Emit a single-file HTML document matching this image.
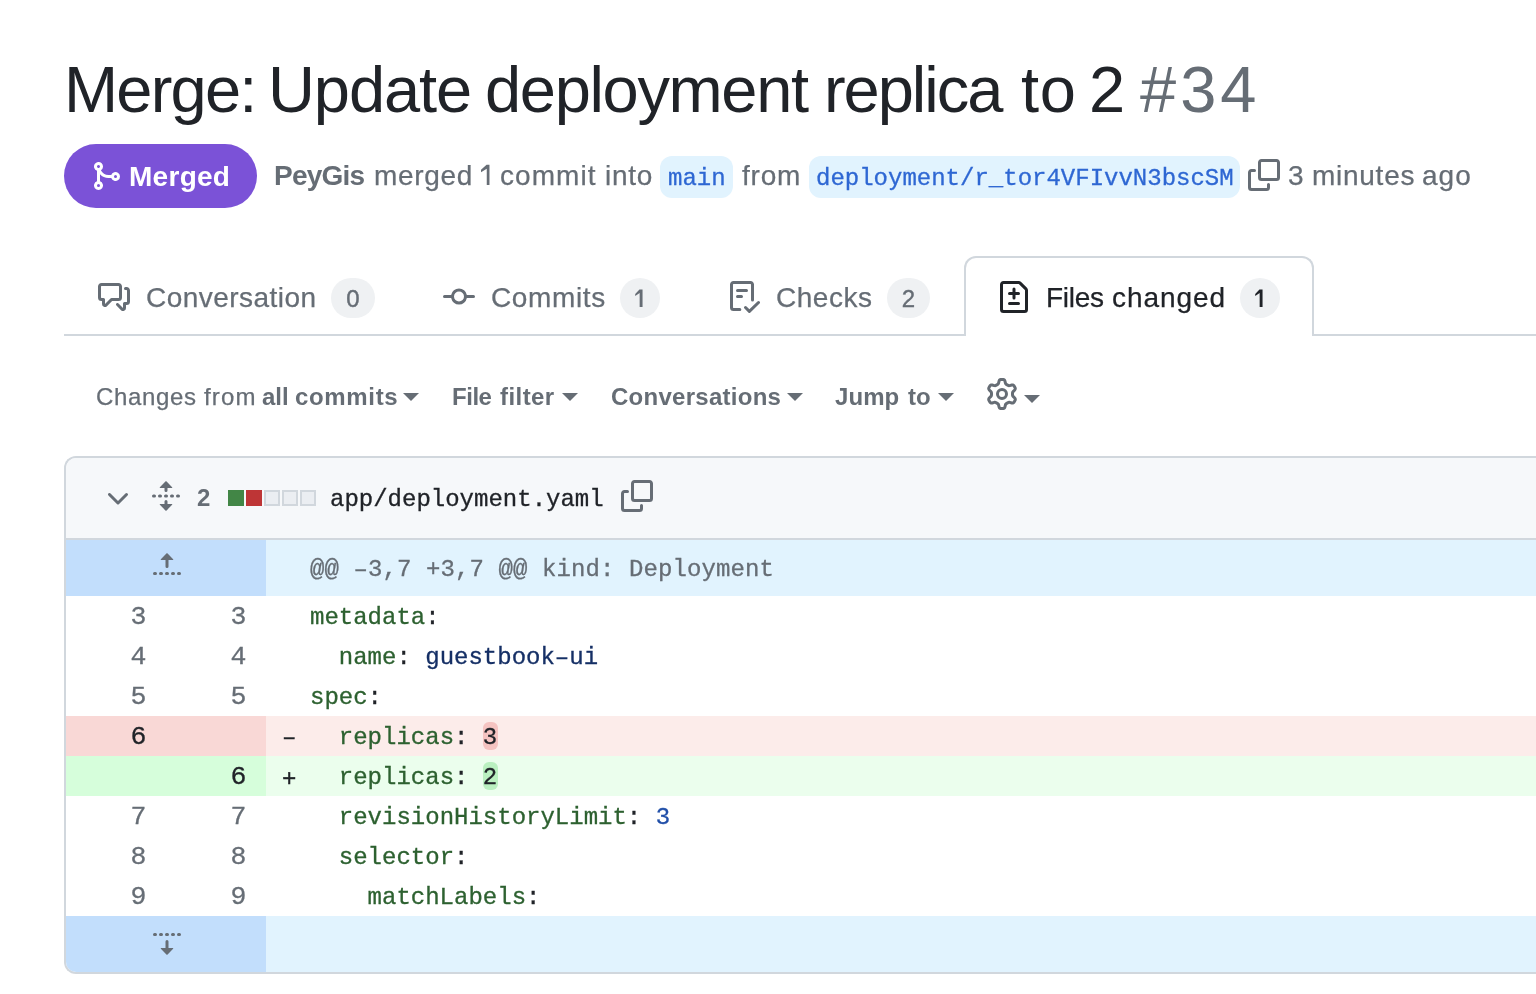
<!DOCTYPE html>
<html><head><meta charset="utf-8">
<style>
*{box-sizing:border-box;margin:0;padding:0}
html,body{width:1536px;height:994px;overflow:hidden;background:#fff}
body{font-family:"Liberation Sans",sans-serif;color:#202328;position:relative}
.t{position:absolute;white-space:pre;line-height:1;will-change:transform}
.ic{position:absolute;display:block}
.b{position:absolute}
</style></head><body>
<div class="b" style="left:64px;top:144px;width:193px;height:64px;border-radius:32px;background:#7b52d7"></div>
<svg class="ic" style="left:90px;top:160px" width="32" height="32" viewBox="0 0 16 16" fill="#fff"><path d="M5.45 5.154A4.25 4.25 0 0 0 9.25 7.5h1.378a2.251 2.251 0 1 1 0 1.5H9.25A5.734 5.734 0 0 1 5 7.123v3.505a2.25 2.25 0 1 1-1.5 0V5.372a2.25 2.25 0 1 1 1.95-.218ZM4.25 13.5a.75.75 0 1 0 0-1.5.75.75 0 0 0 0 1.5Zm8.5-4.5a.75.75 0 1 0 0-1.5.75.75 0 0 0 0 1.5ZM5 3.25a.75.75 0 1 0 0 .005V3.25Z"/></svg>
<div class="b" style="left:660px;top:156px;width:73px;height:42px;border-radius:12px;background:#e1f3fe"></div>
<div class="t" style="left:667.50px;top:167.00px;font-size:24px;font-weight:normal;color:#2e67d3;letter-spacing:0.000px;font-family:'Liberation Mono',monospace;-webkit-text-stroke:0.3px;">main</div>
<div class="b" style="left:809px;top:156px;width:431px;height:42px;border-radius:12px;background:#e1f3fe"></div>
<div class="t" style="left:816.00px;top:167.00px;font-size:24px;font-weight:normal;color:#2e67d3;letter-spacing:0.000px;font-family:'Liberation Mono',monospace;-webkit-text-stroke:0.3px;">deployment/r_tor4VFIvvN3bscSM</div>
<svg class="ic" style="left:1248px;top:159px" width="32" height="32" viewBox="0 0 16 16" fill="#666d75"><path d="M0 6.75C0 5.784.784 5 1.75 5h1.5a.75.75 0 0 1 0 1.5h-1.5a.25.25 0 0 0-.25.25v7.5c0 .138.112.25.25.25h7.5a.25.25 0 0 0 .25-.25v-1.5a.75.75 0 0 1 1.5 0v1.5A1.75 1.75 0 0 1 9.25 16h-7.5A1.75 1.75 0 0 1 0 14.25ZM5 1.75C5 .784 5.784 0 6.75 0h7.5C15.216 0 16 .784 16 1.75v7.5A1.75 1.75 0 0 1 14.25 11h-7.5A1.75 1.75 0 0 1 5 9.25Zm1.75-.25a.25.25 0 0 0-.25.25v7.5c0 .138.112.25.25.25h7.5a.25.25 0 0 0 .25-.25v-7.5a.25.25 0 0 0-.25-.25Z"/></svg>
<div class="b" style="left:64px;top:334px;width:1472px;height:2px;background:#d1d7dd"></div>
<div class="b" style="left:964px;top:256px;width:350px;height:80px;border:2px solid #d1d7dd;border-bottom:none;border-radius:12px 12px 0 0;background:#fff"></div>
<svg class="ic" style="left:98px;top:281px" width="32" height="32" viewBox="0 0 16 16" fill="#666d75"><path d="M1.75 1h8.5c.966 0 1.75.784 1.75 1.75v5.5A1.75 1.75 0 0 1 10.25 10H7.061l-2.574 2.573A1.458 1.458 0 0 1 2 11.543V10h-.25A1.75 1.75 0 0 1 0 8.25v-5.5C0 1.784.784 1 1.75 1ZM1.5 2.75v5.5c0 .138.112.25.25.25h1a.75.75 0 0 1 .75.75v2.19l2.72-2.72a.749.749 0 0 1 .53-.22h3.5a.25.25 0 0 0 .25-.25v-5.5a.25.25 0 0 0-.25-.25h-8.5a.25.25 0 0 0-.25.25Zm13 2a.25.25 0 0 0-.25-.25h-.5a.75.75 0 0 1 0-1.5h.5c.966 0 1.75.784 1.75 1.75v5.5A1.75 1.75 0 0 1 14.25 12H14v1.543a1.458 1.458 0 0 1-2.487 1.03L9.22 12.28a.749.749 0 0 1 .326-1.275.749.749 0 0 1 .734.215l2.22 2.22v-2.19a.75.75 0 0 1 .75-.75h1a.25.25 0 0 0 .25-.25Z"/></svg>
<svg class="ic" style="left:443px;top:281px" width="32" height="32" viewBox="0 0 16 16" fill="#666d75"><path d="M11.93 8.5a4.002 4.002 0 0 1-7.86 0H.75a.75.75 0 0 1 0-1.5h3.32a4.002 4.002 0 0 1 7.86 0h3.32a.75.75 0 0 1 0 1.5Zm-1.43-.75a2.5 2.5 0 1 0-5 0 2.5 2.5 0 0 0 5 0Z"/></svg>
<svg class="ic" style="left:728px;top:281px" width="32" height="32" viewBox="0 0 16 16" fill="#666d75"><path d="M2.5 1.75v11.5c0 .138.112.25.25.25h3.17a.75.75 0 0 1 0 1.5H2.75A1.75 1.75 0 0 1 1 13.25V1.75C1 .784 1.784 0 2.75 0h8.5C12.216 0 13 .784 13 1.75v7.736a.75.75 0 0 1-1.5 0V1.75a.25.25 0 0 0-.25-.25h-8.5a.25.25 0 0 0-.25.25Zm13.274 9.537v-.001l-4.557 4.45a.75.75 0 0 1-1.055-.008l-1.943-1.95a.75.75 0 0 1 1.062-1.058l1.419 1.425 4.026-3.932a.75.75 0 1 1 1.048 1.074ZM4.75 4h4.5a.75.75 0 0 1 0 1.5h-4.5a.75.75 0 0 1 0-1.5ZM4 7.75A.75.75 0 0 1 4.75 7h2a.75.75 0 0 1 0 1.5h-2A.75.75 0 0 1 4 7.75Z"/></svg>
<svg class="ic" style="left:998px;top:281px" width="32" height="32" viewBox="0 0 16 16" fill="#202328"><path d="M1 1.75C1 .784 1.784 0 2.75 0h7.586c.464 0 .909.184 1.237.513l2.914 2.914c.329.328.513.773.513 1.237v9.586A1.75 1.75 0 0 1 13.25 16H2.75A1.75 1.75 0 0 1 1 14.25Zm1.75-.25a.25.25 0 0 0-.25.25v12.5c0 .138.112.25.25.25h10.5a.25.25 0 0 0 .25-.25V4.664a.25.25 0 0 0-.073-.177l-2.914-2.914a.25.25 0 0 0-.177-.073ZM8 3.25a.75.75 0 0 1 .75.75v1.5h1.5a.75.75 0 0 1 0 1.5h-1.5v1.5a.75.75 0 0 1-1.5 0V7h-1.5a.75.75 0 0 1 0-1.5h1.5V4A.75.75 0 0 1 8 3.25Zm-3 8a.75.75 0 0 1 .75-.75h4.5a.75.75 0 0 1 0 1.5h-4.5a.75.75 0 0 1-.75-.75Z"/></svg>
<div class="b" style="left:331px;top:278px;width:44px;height:40px;border-radius:20px;background:#eff1f3"></div><div class="t" style="left:331px;top:287px;width:44px;font-size:24px;text-align:center;color:#666d75;-webkit-text-stroke:0.4px #666d75">0</div>
<div class="b" style="left:620px;top:278px;width:40px;height:40px;border-radius:20px;background:#eff1f3"></div><div class="t" style="left:620px;top:287px;width:40px;font-size:24px;text-align:center;color:#666d75;-webkit-text-stroke:0.4px #666d75"></div>
<div class="b" style="left:887px;top:278px;width:43px;height:40px;border-radius:20px;background:#eff1f3"></div><div class="t" style="left:887px;top:287px;width:43px;font-size:24px;text-align:center;color:#666d75;-webkit-text-stroke:0.4px #666d75">2</div>
<div class="b" style="left:1240px;top:278px;width:40px;height:40px;border-radius:20px;background:#eff1f3"></div><div class="t" style="left:1240px;top:287px;width:40px;font-size:24px;text-align:center;color:#202328;-webkit-text-stroke:0.4px #202328"></div>
<div class="b" style="left:403px;top:393px;width:0;height:0;border-left:8px solid transparent;border-right:8px solid transparent;border-top:8px solid #666d75"></div>
<div class="b" style="left:562px;top:393px;width:0;height:0;border-left:8px solid transparent;border-right:8px solid transparent;border-top:8px solid #666d75"></div>
<div class="b" style="left:787px;top:393px;width:0;height:0;border-left:8px solid transparent;border-right:8px solid transparent;border-top:8px solid #666d75"></div>
<div class="b" style="left:938px;top:393px;width:0;height:0;border-left:8px solid transparent;border-right:8px solid transparent;border-top:8px solid #666d75"></div>
<svg class="ic" style="left:986px;top:378px" width="32" height="32" viewBox="0 0 16 16" fill="#666d75"><path d="M8 0a8.2 8.2 0 0 1 .701.031C9.444.095 9.99.645 10.16 1.29l.288 1.107c.018.066.079.158.212.224.231.114.454.243.668.386.123.082.233.09.299.071l1.103-.303c.644-.176 1.392.021 1.82.63.27.385.506.792.704 1.218.315.675.111 1.422-.364 1.891l-.814.806c-.049.048-.098.147-.088.294.016.257.016.515 0 .772-.01.147.038.246.088.294l.814.806c.475.469.679 1.216.364 1.891a7.977 7.977 0 0 1-.704 1.217c-.428.61-1.176.807-1.82.63l-1.102-.302c-.067-.019-.177-.011-.3.071a5.909 5.909 0 0 1-.668.386c-.133.066-.194.158-.211.224l-.29 1.106c-.168.646-.715 1.196-1.458 1.26a8.006 8.006 0 0 1-1.402 0c-.743-.064-1.289-.614-1.458-1.26l-.289-1.106c-.018-.066-.079-.158-.212-.224a5.738 5.738 0 0 1-.668-.386c-.123-.082-.233-.09-.299-.071l-1.103.303c-.644.176-1.392-.021-1.82-.63a8.12 8.12 0 0 1-.704-1.218c-.315-.675-.111-1.422.363-1.891l.815-.806c.05-.048.098-.147.088-.294a6.214 6.214 0 0 1 0-.772c.01-.147-.038-.246-.088-.294l-.815-.806C.635 6.045.431 5.298.746 4.623a7.92 7.92 0 0 1 .704-1.217c.428-.61 1.176-.807 1.820-.63l1.102.302c.067.019.177.011.3-.071.214-.143.437-.272.668-.386.133-.066.194-.158.211-.224l.29-1.106C6.009.645 6.556.095 7.299.03 7.53.01 7.764 0 8 0Zm-.571 1.525c-.036.003-.108.036-.137.146l-.289 1.105c-.147.561-.549.967-.998 1.189-.173.086-.34.183-.5.29-.417.278-.97.423-1.529.27l-1.103-.303c-.109-.03-.175.016-.195.045-.22.312-.412.644-.573.99-.014.031-.021.11.059.19l.815.806c.411.406.562.957.53 1.456a4.709 4.709 0 0 0 0 .582c.032.499-.119 1.05-.53 1.456l-.815.806c-.081.08-.073.159-.059.19.162.346.353.677.573.989.02.03.085.076.195.046l1.102-.303c.56-.153 1.113-.008 1.53.27.161.107.328.204.501.29.447.222.85.629.997 1.189l.289 1.105c.029.109.101.143.137.146a6.6 6.6 0 0 0 1.142 0c.036-.003.108-.036.137-.146l.289-1.105c.147-.561.549-.967.998-1.189.173-.086.34-.183.5-.29.417-.278.97-.423 1.529-.27l1.103.303c.109.029.175-.016.195-.045.22-.313.411-.644.573-.99.014-.031.021-.11-.059-.19l-.815-.806c-.411-.406-.562-.957-.53-1.456a4.709 4.709 0 0 0 0-.582c-.032-.499.119-1.05.53-1.456l.815-.806c.081-.08.073-.159.059-.19a6.464 6.464 0 0 0-.573-.989c-.02-.03-.085-.076-.195-.046l-1.102.303c-.56.153-1.113.008-1.53-.27a4.44 4.44 0 0 0-.501-.29c-.447-.222-.85-.629-.997-1.189l-.289-1.105c-.029-.11-.101-.143-.137-.146a6.6 6.6 0 0 0-1.142 0ZM11 8a3 3 0 1 1-6 0 3 3 0 0 1 6 0ZM9.5 8a1.5 1.5 0 1 0-3.001.001A1.5 1.5 0 0 0 9.5 8Z"/></svg>
<div class="b" style="left:1024px;top:395px;width:0;height:0;border-left:8px solid transparent;border-right:8px solid transparent;border-top:8px solid #666d75"></div>
<div class="b" style="left:64px;top:456px;width:1500px;height:518px;border:2px solid #d1d7dd;border-right:none;border-radius:12px 0 0 12px;overflow:hidden;background:#fff">
<div class="b" style="left:0;top:0;right:0;height:82px;background:#f6f8fa;border-bottom:2px solid #d1d7dd"></div>
<div class="b" style="left:0px;top:82px;width:200px;height:56px;background:#c2defc;"></div>
<div class="b" style="left:200px;top:82px;width:1400px;height:56px;background:#e1f3fe;"></div>
<div class="b" style="left:0px;top:258px;width:200px;height:40px;background:#f9d8d6;"></div>
<div class="b" style="left:200px;top:258px;width:1400px;height:40px;background:#fcecea;"></div>
<div class="b" style="left:0px;top:298px;width:200px;height:40px;background:#d6fedb;"></div>
<div class="b" style="left:200px;top:298px;width:1400px;height:40px;background:#ebfeed;"></div>
<div class="b" style="left:0px;top:458px;width:200px;height:56px;background:#c2defc;"></div>
<div class="b" style="left:200px;top:458px;width:1400px;height:56px;background:#e1f3fe;"></div>
</div>
<svg class="ic" style="left:102px;top:483px" width="32" height="32" viewBox="0 0 16 16" fill="#666d75"><path d="M12.78 5.22a.749.749 0 0 1 0 1.06l-4.25 4.25a.749.749 0 0 1-1.06 0L3.22 6.28a.749.749 0 0 1 .326-1.275.749.749 0 0 1 .734.215L8 8.939l3.72-3.719a.749.749 0 0 1 1.06 0Z"/></svg>
<svg class="ic" style="left:150px;top:480px" width="32" height="32" viewBox="0 0 16 16" fill="#666d75"><path d="m8.177.677 2.896 2.896a.25.25 0 0 1-.177.427H8.75v1.25a.75.75 0 0 1-1.5 0V4H5.104a.25.25 0 0 1-.177-.427L7.823.677a.25.25 0 0 1 .354 0ZM7.25 10.75a.75.75 0 0 1 1.5 0V12h2.146a.25.25 0 0 1 .177.427l-2.896 2.896a.25.25 0 0 1-.354 0l-2.896-2.896A.25.25 0 0 1 5.104 12H7.25v-1.25Zm-5-2a.75.75 0 0 0 0-1.5h-.5a.75.75 0 0 0 0 1.5h.5ZM6 8a.75.75 0 0 1-.75.75h-.5a.75.75 0 0 1 0-1.5h.5A.75.75 0 0 1 6 8Zm2.25.75a.75.75 0 0 0 0-1.5h-.5a.75.75 0 0 0 0 1.5h.5ZM12 8a.75.75 0 0 1-.75.75h-.5a.75.75 0 0 1 0-1.5h.5A.75.75 0 0 1 12 8Zm2.25.75a.75.75 0 0 0 0-1.5h-.5a.75.75 0 0 0 0 1.5h.5Z"/></svg>
<div class="b" style="left:228px;top:490px;width:16px;height:16px;background:#428646;"></div>
<div class="b" style="left:246px;top:490px;width:16px;height:16px;background:#be3536;"></div>
<div class="b" style="left:264px;top:490px;width:16px;height:16px;background:#ebeef2;border:2px solid #d1d7dd;"></div>
<div class="b" style="left:282px;top:490px;width:16px;height:16px;background:#ebeef2;border:2px solid #d1d7dd;"></div>
<div class="b" style="left:300px;top:490px;width:16px;height:16px;background:#ebeef2;border:2px solid #d1d7dd;"></div>
<div class="t" style="left:330.00px;top:487.60px;font-size:24px;font-weight:normal;color:#202328;letter-spacing:0.000px;font-family:'Liberation Mono',monospace;-webkit-text-stroke:0.3px;">app/deployment.yaml</div>
<svg class="ic" style="left:621px;top:480px" width="32" height="32" viewBox="0 0 16 16" fill="#666d75"><path d="M0 6.75C0 5.784.784 5 1.75 5h1.5a.75.75 0 0 1 0 1.5h-1.5a.25.25 0 0 0-.25.25v7.5c0 .138.112.25.25.25h7.5a.25.25 0 0 0 .25-.25v-1.5a.75.75 0 0 1 1.5 0v1.5A1.75 1.75 0 0 1 9.25 16h-7.5A1.75 1.75 0 0 1 0 14.25ZM5 1.75C5 .784 5.784 0 6.75 0h7.5C15.216 0 16 .784 16 1.75v7.5A1.75 1.75 0 0 1 14.25 11h-7.5A1.75 1.75 0 0 1 5 9.25Zm1.75-.25a.25.25 0 0 0-.25.25v7.5c0 .138.112.25.25.25h7.5a.25.25 0 0 0 .25-.25v-7.5a.25.25 0 0 0-.25-.25Z"/></svg>
<svg class="ic" style="left:151px;top:550px" width="32" height="32" viewBox="0 0 16 16" fill="#666d75"><path d="M7.823 1.677 4.927 4.573A.25.25 0 0 0 5.104 5H7.25v3.236a.75.75 0 1 0 1.5 0V5h2.146a.25.25 0 0 0 .177-.427L8.177 1.677a.25.25 0 0 0-.354 0ZM13.75 11a.75.75 0 0 0 0 1.5h.5a.75.75 0 0 0 0-1.5h-.5Zm-3.75.75a.75.75 0 0 1 .75-.75h.5a.75.75 0 0 1 0 1.5h-.5a.75.75 0 0 1-.75-.75ZM7.75 11a.75.75 0 0 0 0 1.5h.5a.75.75 0 0 0 0-1.5h-.5ZM4 11.75a.75.75 0 0 1 .75-.75h.5a.75.75 0 0 1 0 1.5h-.5a.75.75 0 0 1-.75-.75ZM1.75 11a.75.75 0 0 0 0 1.5h.5a.75.75 0 0 0 0-1.5h-.5Z"/></svg>
<div class="t" style="left:309.50px;top:557.60px;font-size:24px;font-weight:normal;color:#666d75;letter-spacing:0.100px;font-family:'Liberation Mono',monospace;-webkit-text-stroke:0.3px;">@@ –3,7 +3,7 @@ kind: Deployment</div>
<svg class="ic" style="left:151px;top:926px" width="32" height="32" viewBox="0 0 16 16" fill="#666d75"><path d="m8.177 14.323 2.896-2.896a.25.25 0 0 0-.177-.427H8.75V7.764a.75.75 0 1 0-1.5 0V11H5.104a.25.25 0 0 0-.177.427l2.896 2.896a.25.25 0 0 0 .354 0ZM2.25 5a.75.75 0 0 0 0-1.5h-.5a.75.75 0 0 0 0 1.5h.5ZM6 4.25a.75.75 0 0 1-.75.75h-.5a.75.75 0 0 1 0-1.5h.5a.75.75 0 0 1 .75.75ZM8.25 5a.75.75 0 0 0 0-1.5h-.5a.75.75 0 0 0 0 1.5h.5ZM12 4.25a.75.75 0 0 1-.75.75h-.5a.75.75 0 0 1 0-1.5h.5a.75.75 0 0 1 .75.75Zm2.25.75a.75.75 0 0 0 0-1.5h-.5a.75.75 0 0 0 0 1.5h.5Z"/></svg>
<div class="t" style="left:0px;width:146.5px;text-align:right;top:603.69px;font-size:26.5px;font-family:'Liberation Mono',monospace;color:#666d75;-webkit-text-stroke:0.3px #666d75">3</div>
<div class="t" style="left:0px;width:246.5px;text-align:right;top:603.69px;font-size:26.5px;font-family:'Liberation Mono',monospace;color:#666d75;-webkit-text-stroke:0.3px #666d75">3</div>
<div class="t" style="left:309.50px;top:605.60px;font-size:24px;font-weight:normal;color:#202328;letter-spacing:0.000px;font-family:'Liberation Mono',monospace;-webkit-text-stroke:0.3px;"><span style="color:#2d6130">metadata</span>:</div>
<div class="t" style="left:0px;width:146.5px;text-align:right;top:643.69px;font-size:26.5px;font-family:'Liberation Mono',monospace;color:#666d75;-webkit-text-stroke:0.3px #666d75">4</div>
<div class="t" style="left:0px;width:246.5px;text-align:right;top:643.69px;font-size:26.5px;font-family:'Liberation Mono',monospace;color:#666d75;-webkit-text-stroke:0.3px #666d75">4</div>
<div class="t" style="left:309.50px;top:645.60px;font-size:24px;font-weight:normal;color:#202328;letter-spacing:0.000px;font-family:'Liberation Mono',monospace;-webkit-text-stroke:0.3px;">  <span style="color:#2d6130">name</span>: <span style="color:#152f65">guestbook–ui</span></div>
<div class="t" style="left:0px;width:146.5px;text-align:right;top:683.69px;font-size:26.5px;font-family:'Liberation Mono',monospace;color:#666d75;-webkit-text-stroke:0.3px #666d75">5</div>
<div class="t" style="left:0px;width:246.5px;text-align:right;top:683.69px;font-size:26.5px;font-family:'Liberation Mono',monospace;color:#666d75;-webkit-text-stroke:0.3px #666d75">5</div>
<div class="t" style="left:309.50px;top:685.60px;font-size:24px;font-weight:normal;color:#202328;letter-spacing:0.000px;font-family:'Liberation Mono',monospace;-webkit-text-stroke:0.3px;"><span style="color:#2d6130">spec</span>:</div>
<div class="b" style="left:483px;top:722px;width:15px;height:28px;border-radius:6px;background:#f5c3c1"></div>
<div class="t" style="left:0px;width:146.5px;text-align:right;top:723.69px;font-size:26.5px;font-family:'Liberation Mono',monospace;color:#202328;-webkit-text-stroke:0.3px #202328">6</div>
<div class="t" style="left:282.00px;top:725.60px;font-size:24px;font-weight:normal;color:#202328;letter-spacing:0.000px;font-family:'Liberation Mono',monospace;-webkit-text-stroke:0.4px #212328">–</div>
<div class="t" style="left:309.50px;top:725.60px;font-size:24px;font-weight:normal;color:#202328;letter-spacing:0.000px;font-family:'Liberation Mono',monospace;-webkit-text-stroke:0.3px;">  <span style="color:#2d6130">replicas</span>: 3</div>
<div class="b" style="left:483px;top:762px;width:15px;height:28px;border-radius:6px;background:#baf0c0"></div>
<div class="t" style="left:0px;width:246.5px;text-align:right;top:763.69px;font-size:26.5px;font-family:'Liberation Mono',monospace;color:#202328;-webkit-text-stroke:0.3px #202328">6</div>
<div class="t" style="left:282.00px;top:767.60px;font-size:24px;font-weight:normal;color:#202328;letter-spacing:0.000px;font-family:'Liberation Mono',monospace;-webkit-text-stroke:0.4px #212328">+</div>
<div class="t" style="left:309.50px;top:765.60px;font-size:24px;font-weight:normal;color:#202328;letter-spacing:0.000px;font-family:'Liberation Mono',monospace;-webkit-text-stroke:0.3px;">  <span style="color:#2d6130">replicas</span>: 2</div>
<div class="t" style="left:0px;width:146.5px;text-align:right;top:803.69px;font-size:26.5px;font-family:'Liberation Mono',monospace;color:#666d75;-webkit-text-stroke:0.3px #666d75">7</div>
<div class="t" style="left:0px;width:246.5px;text-align:right;top:803.69px;font-size:26.5px;font-family:'Liberation Mono',monospace;color:#666d75;-webkit-text-stroke:0.3px #666d75">7</div>
<div class="t" style="left:309.50px;top:805.60px;font-size:24px;font-weight:normal;color:#202328;letter-spacing:0.000px;font-family:'Liberation Mono',monospace;-webkit-text-stroke:0.3px;">  <span style="color:#2d6130">revisionHistoryLimit</span>: <span style="color:#214fa8">3</span></div>
<div class="t" style="left:0px;width:146.5px;text-align:right;top:843.69px;font-size:26.5px;font-family:'Liberation Mono',monospace;color:#666d75;-webkit-text-stroke:0.3px #666d75">8</div>
<div class="t" style="left:0px;width:246.5px;text-align:right;top:843.69px;font-size:26.5px;font-family:'Liberation Mono',monospace;color:#666d75;-webkit-text-stroke:0.3px #666d75">8</div>
<div class="t" style="left:309.50px;top:845.60px;font-size:24px;font-weight:normal;color:#202328;letter-spacing:0.000px;font-family:'Liberation Mono',monospace;-webkit-text-stroke:0.3px;">  <span style="color:#2d6130">selector</span>:</div>
<div class="t" style="left:0px;width:146.5px;text-align:right;top:883.69px;font-size:26.5px;font-family:'Liberation Mono',monospace;color:#666d75;-webkit-text-stroke:0.3px #666d75">9</div>
<div class="t" style="left:0px;width:246.5px;text-align:right;top:883.69px;font-size:26.5px;font-family:'Liberation Mono',monospace;color:#666d75;-webkit-text-stroke:0.3px #666d75">9</div>
<div class="t" style="left:309.50px;top:885.60px;font-size:24px;font-weight:normal;color:#202328;letter-spacing:0.000px;font-family:'Liberation Mono',monospace;-webkit-text-stroke:0.3px;">    <span style="color:#2d6130">matchLabels</span>:</div>
<div class="t" style="left:63.90px;top:56.98px;font-size:65px;font-weight:normal;color:#202328;letter-spacing:-1.800px;font-family:'Liberation Sans',sans-serif;-webkit-text-stroke:0px #202328;">Merge:</div>
<div class="t" style="left:267.60px;top:56.98px;font-size:65px;font-weight:normal;color:#202328;letter-spacing:-1.080px;font-family:'Liberation Sans',sans-serif;-webkit-text-stroke:0px #202328;">Update</div>
<div class="t" style="left:485.20px;top:56.98px;font-size:65px;font-weight:normal;color:#202328;letter-spacing:-1.333px;font-family:'Liberation Sans',sans-serif;-webkit-text-stroke:0px #202328;">deployment</div>
<div class="t" style="left:824.20px;top:56.98px;font-size:65px;font-weight:normal;color:#202328;letter-spacing:-2.033px;font-family:'Liberation Sans',sans-serif;-webkit-text-stroke:0px #202328;">replica</div>
<div class="t" style="left:1021.10px;top:56.98px;font-size:65px;font-weight:normal;color:#202328;letter-spacing:0.600px;font-family:'Liberation Sans',sans-serif;-webkit-text-stroke:0px #202328;">to</div>
<div class="t" style="left:1089.10px;top:56.98px;font-size:65px;font-weight:normal;color:#202328;letter-spacing:0.000px;font-family:'Liberation Sans',sans-serif;-webkit-text-stroke:0px #202328;">2</div>
<div class="t" style="left:1140.40px;top:56.98px;font-size:65px;font-weight:normal;color:#666d75;letter-spacing:4.000px;font-family:'Liberation Sans',sans-serif;-webkit-text-stroke:0px #666d75;">#34</div>
<div class="t" style="left:129.20px;top:163.30px;font-size:28px;font-weight:bold;color:#ffffff;letter-spacing:0.280px;font-family:'Liberation Sans',sans-serif;-webkit-text-stroke:0.0px #ffffff;">Merged</div>
<div class="t" style="left:273.90px;top:162.30px;font-size:28px;font-weight:bold;color:#666d75;letter-spacing:-0.760px;font-family:'Liberation Sans',sans-serif;-webkit-text-stroke:0.0px #666d75;">PeyGis</div>
<div class="t" style="left:373.60px;top:162.30px;font-size:28px;font-weight:normal;color:#666d75;letter-spacing:0.680px;font-family:'Liberation Sans',sans-serif;-webkit-text-stroke:0.25px #666d75;">merged</div>
<div class="t" style="left:499.70px;top:162.30px;font-size:28px;font-weight:normal;color:#666d75;letter-spacing:1.040px;font-family:'Liberation Sans',sans-serif;-webkit-text-stroke:0.25px #666d75;">commit</div>
<div class="t" style="left:604.80px;top:162.30px;font-size:28px;font-weight:normal;color:#666d75;letter-spacing:0.733px;font-family:'Liberation Sans',sans-serif;-webkit-text-stroke:0.25px #666d75;">into</div>
<div class="t" style="left:741.60px;top:162.30px;font-size:28px;font-weight:normal;color:#666d75;letter-spacing:0.800px;font-family:'Liberation Sans',sans-serif;-webkit-text-stroke:0.25px #666d75;">from</div>
<div class="t" style="left:1288.10px;top:162.30px;font-size:28px;font-weight:normal;color:#666d75;letter-spacing:0.000px;font-family:'Liberation Sans',sans-serif;-webkit-text-stroke:0.25px #666d75;">3</div>
<div class="t" style="left:1312.10px;top:162.30px;font-size:28px;font-weight:normal;color:#666d75;letter-spacing:0.733px;font-family:'Liberation Sans',sans-serif;-webkit-text-stroke:0.25px #666d75;">minutes</div>
<div class="t" style="left:1422.30px;top:162.30px;font-size:28px;font-weight:normal;color:#666d75;letter-spacing:1.000px;font-family:'Liberation Sans',sans-serif;-webkit-text-stroke:0.25px #666d75;">ago</div>
<div class="t" style="left:145.60px;top:284.30px;font-size:28px;font-weight:normal;color:#666d75;letter-spacing:0.473px;font-family:'Liberation Sans',sans-serif;-webkit-text-stroke:0.25px #666d75;">Conversation</div>
<div class="t" style="left:490.50px;top:284.30px;font-size:28px;font-weight:normal;color:#666d75;letter-spacing:0.633px;font-family:'Liberation Sans',sans-serif;-webkit-text-stroke:0.25px #666d75;">Commits</div>
<div class="t" style="left:775.70px;top:284.30px;font-size:28px;font-weight:normal;color:#666d75;letter-spacing:0.520px;font-family:'Liberation Sans',sans-serif;-webkit-text-stroke:0.25px #666d75;">Checks</div>
<div class="t" style="left:1045.90px;top:284.30px;font-size:28px;font-weight:normal;color:#202328;letter-spacing:-0.250px;font-family:'Liberation Sans',sans-serif;-webkit-text-stroke:0.25px #202328;">Files</div>
<div class="t" style="left:1111.60px;top:284.30px;font-size:28px;font-weight:normal;color:#202328;letter-spacing:0.933px;font-family:'Liberation Sans',sans-serif;-webkit-text-stroke:0.25px #202328;">changed</div>
<div class="t" style="left:95.90px;top:384.68px;font-size:24px;font-weight:normal;color:#666d75;letter-spacing:0.667px;font-family:'Liberation Sans',sans-serif;-webkit-text-stroke:0.25px #666d75;">Changes</div>
<div class="t" style="left:203.80px;top:384.68px;font-size:24px;font-weight:normal;color:#666d75;letter-spacing:1.133px;font-family:'Liberation Sans',sans-serif;-webkit-text-stroke:0.25px #666d75;">from</div>
<div class="t" style="left:262.00px;top:384.68px;font-size:24px;font-weight:bold;color:#666d75;letter-spacing:0.000px;font-family:'Liberation Sans',sans-serif;-webkit-text-stroke:0.0px #666d75;">all</div>
<div class="t" style="left:294.50px;top:384.68px;font-size:24px;font-weight:bold;color:#666d75;letter-spacing:0.666px;font-family:'Liberation Sans',sans-serif;-webkit-text-stroke:0.0px #666d75;">commits</div>
<div class="t" style="left:452.40px;top:384.68px;font-size:24px;font-weight:bold;color:#666d75;letter-spacing:-0.467px;font-family:'Liberation Sans',sans-serif;-webkit-text-stroke:0.0px #666d75;">File</div>
<div class="t" style="left:500.40px;top:384.68px;font-size:24px;font-weight:bold;color:#666d75;letter-spacing:0.440px;font-family:'Liberation Sans',sans-serif;-webkit-text-stroke:0.0px #666d75;">filter</div>
<div class="t" style="left:610.50px;top:384.68px;font-size:24px;font-weight:bold;color:#666d75;letter-spacing:0.266px;font-family:'Liberation Sans',sans-serif;-webkit-text-stroke:0.0px #666d75;">Conversations</div>
<div class="t" style="left:835.40px;top:384.68px;font-size:24px;font-weight:bold;color:#666d75;letter-spacing:0.066px;font-family:'Liberation Sans',sans-serif;-webkit-text-stroke:0.0px #666d75;">Jump</div>
<div class="t" style="left:908.10px;top:384.68px;font-size:24px;font-weight:bold;color:#666d75;letter-spacing:0.000px;font-family:'Liberation Sans',sans-serif;-webkit-text-stroke:0.0px #666d75;">to</div>
<div class="t" style="left:197.20px;top:485.68px;font-size:24px;font-weight:bold;color:#666d75;letter-spacing:0.000px;font-family:'Liberation Sans',sans-serif;-webkit-text-stroke:0.0px #666d75;">2</div>
<svg class="ic" style="left:0;top:0" width="1536" height="994"><path fill="#666d75" d="M486.56 164.80H489.48V185.00H486.76V168.84L481.00 172.27V169.85Z"/><path fill="#666d75" d="M639.46 289.60H642.55V307.10H639.66V293.10L635.20 296.08V293.98Z"/><path fill="#202328" d="M1259.46 289.60H1262.55V307.10H1259.66V293.10L1255.20 296.08V293.98Z"/></svg>
</body></html>
